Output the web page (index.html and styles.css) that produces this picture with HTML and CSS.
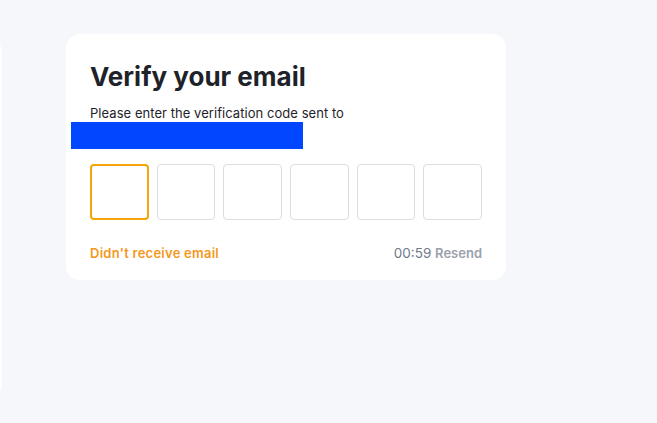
FILE: index.html
```html
<!DOCTYPE html>
<html>
<head>
<meta charset="utf-8">
<link rel="stylesheet" href="styles.css">
</head>
<body>
<div class="page">
  <div class="side-panel"></div>
  <div class="card">
    <h1 class="title">Verify your email</h1>
    <p class="subtitle">Please enter the verification code sent to</p>
    <div class="redact"></div>
    <div class="code-row">
      <div class="code-box active"></div>
      <div class="code-box"></div>
      <div class="code-box"></div>
      <div class="code-box"></div>
      <div class="code-box"></div>
      <div class="code-box"></div>
    </div>
    <div class="footer-row">
      <span class="help-link">Didn't receive email</span>
      <span class="timer">00:59 <span class="resend">Resend</span></span>
    </div>
  </div>
</div>
</body>
</html>
```

FILE: styles.css
```css
html, body {
  margin: 0;
  padding: 0;
  background: #f6f7fa;
  font-family: "Inter", "Noto Sans", "Liberation Sans", sans-serif;
}
.page {
  display: flex;
  align-items: flex-start;
  width: 657px;
  height: 423px;
  overflow: hidden;
}
.side-panel {
  flex: none;
  width: 400px;
  height: 353px;
  margin-left: -398px;
  margin-top: 41px;
  background: #fff;
  border-radius: 0 10px 10px 0;
}
.card {
  flex: none;
  width: 392px;
  margin-left: 64px;
  margin-top: 34px;
  padding: 26px 24px 18px;
  background: #fff;
  border-radius: 14px;
}
.title {
  margin: 0;
  font-size: 26px;
  line-height: 34px;
  font-weight: 700;
  color: #1e2329;
}
.subtitle {
  margin: 10px 0 0;
  font-size: 13px;
  line-height: 18px;
  color: #1e2329;
  letter-spacing: 0.05px;
}
.redact {
  width: 232px;
  height: 27px;
  margin-left: -19px;
  background: #0047ff;
}
.code-row {
  display: grid;
  grid-template-columns: repeat(6, 1fr);
  gap: 8px;
  margin-top: 15px;
}
.code-box {
  height: 56px;
  box-sizing: border-box;
  border: 1px solid #dcdde0;
  border-radius: 4px;
}
.code-box.active {
  border: 2px solid #f5a60a;
}
.footer-row {
  display: flex;
  justify-content: space-between;
  align-items: center;
  margin-top: 24px;
  font-size: 13px;
  line-height: 18px;
  font-weight: 600;
}
.help-link {
  color: #f3981d;
  font-size: 13px;
  letter-spacing: 0.25px;
}
.timer {
  color: #707a8a;
  font-weight: 400;
  font-size: 13.5px;
}
.resend {
  color: #9aa1ab;
  font-weight: 600;
  font-size: 13px;
}
```
